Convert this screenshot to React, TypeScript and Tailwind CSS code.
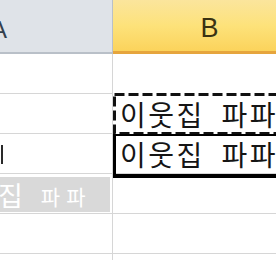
const kr = "font-['Noto_Sans_CJK_KR','Noto_Sans',sans-serif]";

function Row({
  a,
  b,
}: {
  a?: React.ReactNode;
  b?: React.ReactNode;
}) {
  return (
    <div className="flex h-[40px] shrink-0 border-b border-[#d6d6d6]">
      <div className="relative w-[113px] shrink-0 overflow-hidden border-r border-[#d6d6d6]">
        {a}
      </div>
      <div className="relative min-w-0 flex-1 overflow-hidden">{b}</div>
    </div>
  );
}

function CellText({ children }: { children: React.ReactNode }) {
  return (
    <div
      className={`flex h-full items-center whitespace-nowrap pl-[7px] pt-[1px] text-[28px] leading-none tracking-[2.5px] [word-spacing:8px] text-[#151515] ${kr}`}
    >
      {children}
    </div>
  );
}

export default function App() {
  return (
    <div className="relative h-[260px] w-[276px] overflow-hidden bg-white">
      {/* column headers */}
      <div className="flex h-[54px] shrink-0">
        <div className="flex w-[113px] shrink-0 items-center overflow-hidden border-b-2 border-r border-[#b9c0c8] bg-[#dfe3e8]">
          <span className="-ml-[9px] pt-[7px] font-['Liberation_Sans',sans-serif] text-[24px] text-[#33404d]">
            A
          </span>
        </div>
        <div className="flex flex-1 items-center justify-center border-b-[3px] border-[#e6a53d] bg-gradient-to-b from-[#fbe59c] via-[#fde27a] to-[#fbd35b]">
          <span className="pl-[30px] pt-[5px] font-['Liberation_Sans',sans-serif] text-[27px] text-[#3a3212]">
            B
          </span>
        </div>
      </div>

      <div className="flex flex-col">
        <Row />
        <Row b={<CellText>이웃집 파파</CellText>} />
        <Row
          a={
            <div className="flex h-full items-center">
              <span className="ml-[1px] mt-[2px] h-[19px] w-[2px] bg-[#2a2a2a]" />
            </div>
          }
          b={<CellText>이웃집 파파</CellText>}
        />
        <Row
          a={
            <div
              className={`mt-[3px] flex h-[35px] w-[110px] items-center gap-[18px] whitespace-nowrap bg-[#d9d9d9] text-white ${kr}`}
            >
              <span className="-ml-[2px] text-[27px] leading-none">집</span>
              <span className="pt-[3px] text-[21px] leading-none tracking-[6px]">
                파파
              </span>
            </div>
          }
        />
        <Row />
        <Row />
      </div>

      {/* copy marquee around B2 */}
      <svg
        className="pointer-events-none absolute left-[113px] top-[93px]"
        width="170"
        height="42"
      >
        <rect
          x="1.5"
          y="1.5"
          width="170"
          height="39"
          fill="none"
          stroke="white"
          strokeWidth="3"
        />
        <rect
          x="1.5"
          y="1.5"
          width="170"
          height="39"
          fill="none"
          stroke="#111"
          strokeWidth="3"
          strokeDasharray="10 4"
        />
      </svg>

      {/* active cell B3 */}
      <div className="pointer-events-none absolute left-[113px] top-[134px] h-[44px] w-[170px] border-b-[4px] border-l-[3px] border-t-2 border-black" />
    </div>
  );
}
